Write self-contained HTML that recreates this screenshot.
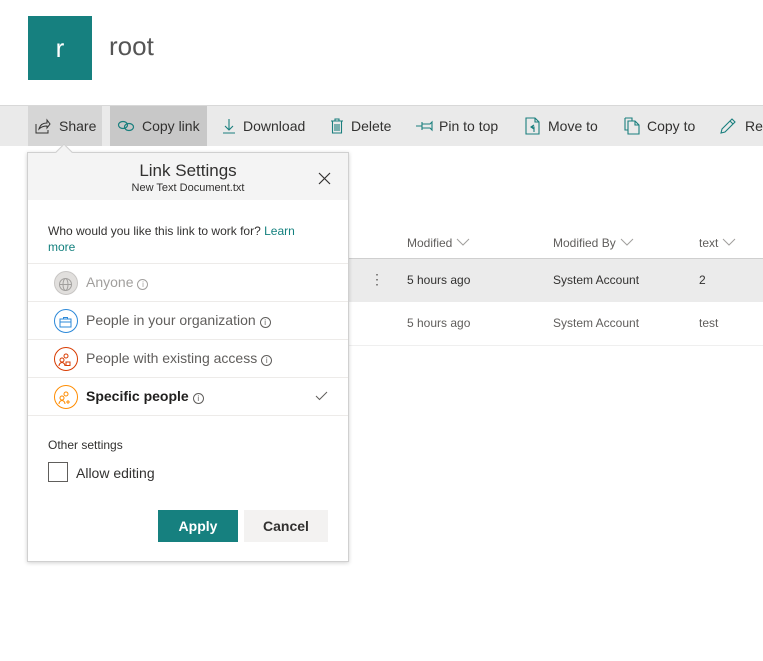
<!DOCTYPE html>
<html><head><meta charset="utf-8"><style>
*{margin:0;padding:0;box-sizing:border-box}
body{width:763px;height:661px;overflow:hidden;background:#fff;font-family:"Liberation Sans",sans-serif;color:#323130;position:relative}
.a{position:absolute;white-space:nowrap}
.tb{position:absolute;left:0;top:105px;width:763px;height:41px;background:#eaeaea;border-top:1px solid #d8d8d8;overflow:hidden}
.btn{position:absolute;top:0;height:40px;font-size:14px;line-height:40px;color:#323130;white-space:nowrap}
.btn span{white-space:nowrap}
.btn svg{position:absolute;top:12px}
.row{position:absolute;left:28px;width:320px;height:38px;border-top:1px solid #edebe9;font-size:14px;line-height:37px;white-space:nowrap}
.ic{position:absolute;left:26px;top:7px;width:24px;height:24px;border-radius:50%;border:1.5px solid}
.info{display:inline-block;width:11px;height:11px;border:1px solid #605e5c;border-radius:50%;font-size:8px;line-height:9px;text-align:center;vertical-align:0px;margin-left:4px;color:#605e5c}
.chev{display:inline-block;margin-left:4px;vertical-align:1px}
</style></head><body>
<div class="a" style="left:28px;top:16px;width:64px;height:64px;background:#16807f;color:#fff;font-size:26px;line-height:64px;text-align:center">r</div>
<div class="a" style="left:109px;top:31px;font-size:26px;color:#555">root</div>

<div class="tb">
 <div class="btn" style="left:28px;width:74px;background:#d6d6d6"><svg width="16" height="16" viewBox="0 0 16 16" style="left:7px" fill="none" stroke="#323130" stroke-width="1"><path d="M1 6v9h12v-3"/><path d="M4 11c1-4 4-6 8-6V2l3 4-3 4V8c-3 0-6 1-8 3z"/></svg><span style="position:absolute;left:31px">Share</span></div>
 <div class="btn" style="left:110px;width:97px;background:#c8c8c8"><svg width="18" height="16" viewBox="0 0 18 16" style="left:7px" fill="none" stroke="#1a7f7e" stroke-width="1.2"><ellipse cx="6" cy="7" rx="4.5" ry="3.5"/><ellipse cx="12" cy="9" rx="4.5" ry="3.5"/></svg><span style="position:absolute;left:32px">Copy link</span></div>
 <div class="btn" style="left:222px"><svg width="14" height="16" viewBox="0 0 14 16" style="left:0" fill="none" stroke="#1a7f7e" stroke-width="1.1"><path d="M7 1v11M3 8l4 4 4-4M1 15h12"/></svg><span style="position:absolute;left:21px">Download</span></div>
 <div class="btn" style="left:330px"><svg width="14" height="16" viewBox="0 0 14 16" style="left:0" fill="none" stroke="#1a7f7e" stroke-width="1.1"><path d="M1 3h12M5 3V1h4v2M2.5 3v12h9V3M5 6v7M7 6v7M9 6v7"/></svg><span style="position:absolute;left:21px">Delete</span></div>
 <div class="btn" style="left:416px"><svg width="18" height="14" viewBox="0 0 18 14" style="left:0;top:13px" fill="none" stroke="#1a7f7e" stroke-width="1.1"><path d="M0 7h6M6 3v8M6 5h8l2-2v8l-2-2H6"/></svg><span style="position:absolute;left:23px">Pin to top</span></div>
 <div class="btn" style="left:525px"><svg width="16" height="18" viewBox="0 0 16 18" style="left:0;top:11px" fill="none" stroke="#1a7f7e" stroke-width="1.1"><path d="M1 1h9l4 4v12H1z"/><path d="M10 1v4h4M9 8L6 10l3 2M6 10h3v5"/></svg><span style="position:absolute;left:23px">Move to</span></div>
 <div class="btn" style="left:624px"><svg width="16" height="18" viewBox="0 0 16 18" style="left:0;top:11px" fill="none" stroke="#1a7f7e" stroke-width="1.1"><path d="M1 1h7v3M1 1v12h3"/><path d="M4 4h7l4 4v9H4z"/><path d="M11 4v4h4"/></svg><span style="position:absolute;left:23px">Copy to</span></div>
 <div class="btn" style="left:720px"><svg width="16" height="16" viewBox="0 0 16 16" style="left:0" fill="none" stroke="#1a7f7e" stroke-width="1.1"><path d="M1 15l1-4L12 1l3 3L5 14z M10 3l3 3"/></svg><span style="position:absolute;left:25px">Rename</span></div>
</div>

<!-- list -->
<div class="a" style="left:407px;top:236px;font-size:12px;color:#605e5c">Modified<svg class="chev" width="14" height="8" viewBox="0 0 14 8" fill="none" stroke="#a19f9d"><path d="M1 1l6 6 6-6"/></svg></div>
<div class="a" style="left:553px;top:236px;font-size:12px;color:#605e5c">Modified By<svg class="chev" width="14" height="8" viewBox="0 0 14 8" fill="none" stroke="#a19f9d"><path d="M1 1l6 6 6-6"/></svg></div>
<div class="a" style="left:699px;top:236px;font-size:12px;color:#605e5c">text<svg class="chev" width="14" height="8" viewBox="0 0 14 8" fill="none" stroke="#a19f9d"><path d="M1 1l6 6 6-6"/></svg></div>
<div class="a" style="left:348px;top:258px;width:415px;height:44px;background:#ebebeb;border-top:1px solid #cfcfcf"></div>
<div class="a" style="left:370px;top:271px;font-size:14px;color:#605e5c">&#8942;</div>
<div class="a" style="left:407px;top:273px;font-size:12px;color:#323130">5 hours ago</div>
<div class="a" style="left:553px;top:273px;font-size:12px;color:#323130">System Account</div>
<div class="a" style="left:699px;top:273px;font-size:12px;color:#323130">2</div>
<div class="a" style="left:348px;top:345px;width:415px;height:1px;background:#efefef"></div>
<div class="a" style="left:407px;top:316px;font-size:12px;color:#605e5c">5 hours ago</div>
<div class="a" style="left:553px;top:316px;font-size:12px;color:#605e5c">System Account</div>
<div class="a" style="left:699px;top:316px;font-size:12px;color:#605e5c">test</div>

<!-- dialog -->
<div class="a" style="left:27px;top:152px;width:322px;height:410px;background:#fff;border:1px solid #d0d0d0;box-shadow:0 1px 4px rgba(0,0,0,.18)"></div>
<div class="a" style="left:58px;top:146px;width:12px;height:12px;background:#f4f4f4;transform:rotate(45deg);border-left:1px solid #d0d0d0;border-top:1px solid #d0d0d0"></div>
<div class="a" style="left:28px;top:153px;width:320px;height:47px;background:#f4f4f4"></div>
<div class="a" style="left:28px;top:161px;width:320px;text-align:center;font-size:17px;color:#323130">Link Settings</div>
<div class="a" style="left:28px;top:182px;width:320px;text-align:center;font-size:11px;color:#323130">New Text Document.txt</div>
<svg class="a" style="left:318px;top:172px" width="13" height="13" viewBox="0 0 13 13" stroke="#323130" stroke-width="1.2"><path d="M1 1l11 11M12 1L1 12"/></svg>
<div class="a" style="left:48px;top:223px;font-size:12px;line-height:16px;color:#323130">Who would you like this link to work for? <span style="color:#13807e">Learn</span><br><span style="color:#13807e">more</span></div>

<div class="row" style="top:263px;color:#a19f9d"><div class="ic" style="border-color:#c8c6c4;background:#e1dfdd"><svg width="21" height="21" viewBox="0 0 21 21" fill="none" stroke="#a19f9d" stroke-width="1"><circle cx="10.5" cy="10.5" r="6"/><ellipse cx="10.5" cy="10.5" rx="2.5" ry="6"/><path d="M4.5 10.5h12"/></svg></div><span style="position:absolute;left:58px">Anyone<span class="info" style="border-color:#a19f9d;color:#a19f9d">i</span></span></div>
<div class="row" style="top:301px;color:#605e5c"><div class="ic" style="border-color:#2b88d8"><svg width="21" height="21" viewBox="0 0 21 21" fill="none" stroke="#2b88d8" stroke-width="1"><rect x="5" y="7" width="11" height="8"/><path d="M8.5 7V5.5h4V7M5 10h11"/></svg></div><span style="position:absolute;left:58px">People in your organization<span class="info">i</span></span></div>
<div class="row" style="top:339px;color:#605e5c"><div class="ic" style="border-color:#d83b01"><svg width="21" height="21" viewBox="0 0 21 21" fill="none" stroke="#d83b01" stroke-width="1"><circle cx="11" cy="6" r="2"/><circle cx="7" cy="10" r="2"/><path d="M4 16c0-2 1.5-3.5 3-3.5s3 1.5 3 3.5"/><rect x="11" y="12" width="4" height="3.5"/></svg></div><span style="position:absolute;left:58px">People with existing access<span class="info">i</span></span></div>
<div class="row" style="top:377px;color:#201f1e;font-weight:bold"><div class="ic" style="border-color:#ff8c00"><svg width="21" height="21" viewBox="0 0 21 21" fill="none" stroke="#ff8c00" stroke-width="1"><circle cx="11" cy="6" r="2"/><circle cx="7" cy="10" r="2"/><path d="M4 16c0-2 1.5-3.5 3-3.5s3 1.5 3 3.5M13 12v4M11 14h4"/></svg></div><span style="position:absolute;left:58px">Specific people<span class="info" style="font-weight:normal">i</span></span><svg style="position:absolute;left:287px;top:13px" width="13" height="10" viewBox="0 0 13 10" fill="none" stroke="#605e5c" stroke-width="1"><path d="M1 5l3.5 3.5L12 1"/></svg></div>
<div class="a" style="left:28px;top:415px;width:320px;height:1px;background:#edebe9"></div>

<div class="a" style="left:48px;top:438px;font-size:12px;color:#323130">Other settings</div>
<div class="a" style="left:48px;top:462px;width:20px;height:20px;border:1px solid #605e5c"></div>
<div class="a" style="left:76px;top:465px;font-size:14px;color:#323130">Allow editing</div>
<div class="a" style="left:158px;top:510px;width:80px;height:32px;background:#16807f;color:#fff;font-weight:bold;font-size:14px;line-height:32px;text-align:center">Apply</div>
<div class="a" style="left:244px;top:510px;width:84px;height:32px;background:#f3f2f1;color:#323130;font-weight:bold;font-size:14px;line-height:32px;text-align:center">Cancel</div>
</body></html>
